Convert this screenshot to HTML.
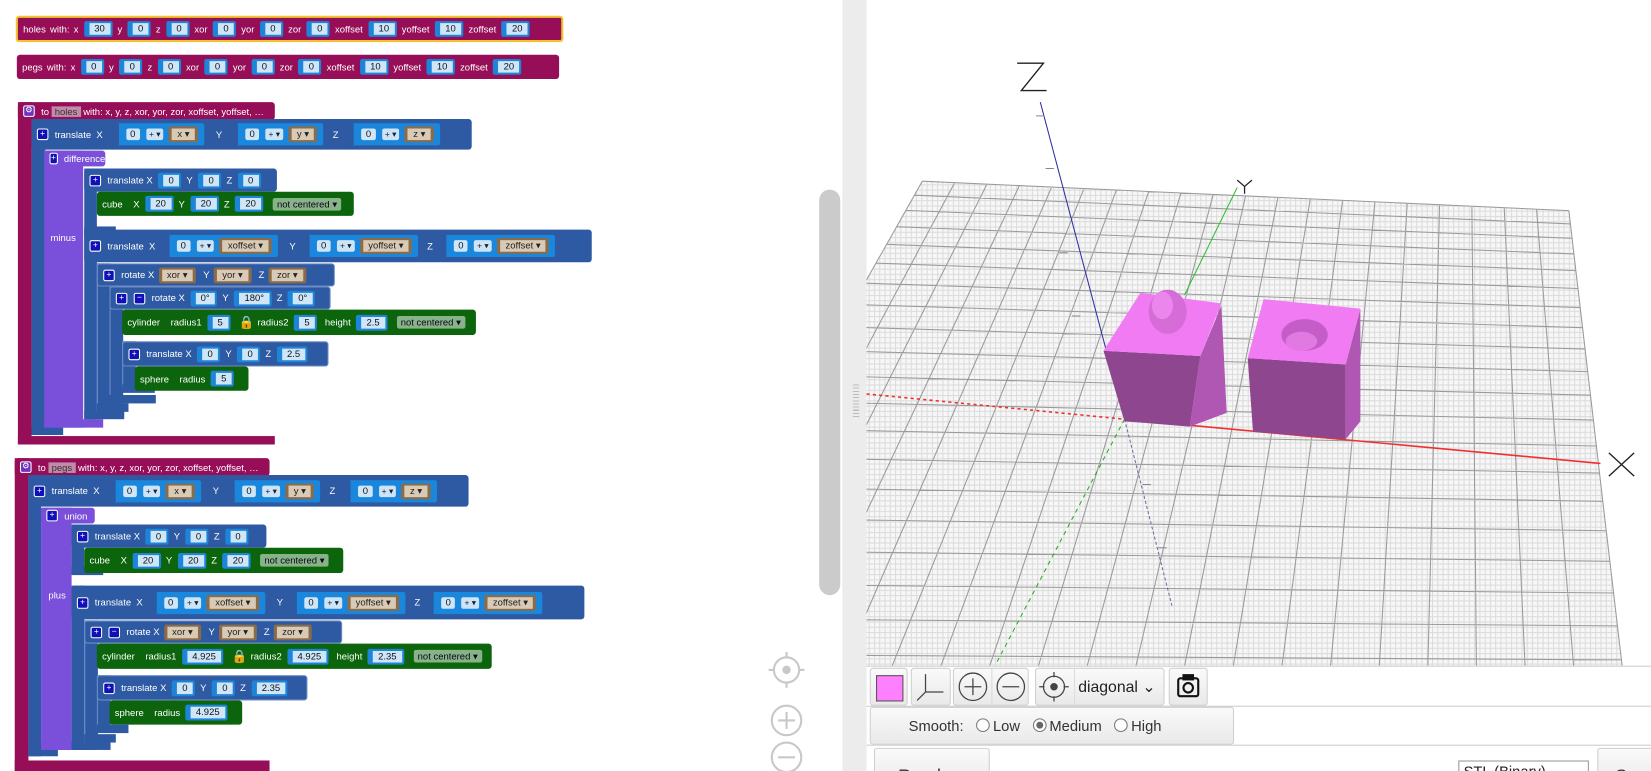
<!DOCTYPE html>
<html><head><meta charset="utf-8">
<style>
html,body{margin:0;padding:0;background:#fff;overflow:hidden;width:1651px;height:771px}
#w{position:relative;width:1568px;height:732px;transform:scale(1.05293,1.0533);transform-origin:0 0;font-family:"Liberation Sans",Arial,sans-serif}
.a{position:absolute}
.b{position:absolute;display:flex;align-items:center;color:#fff;font-size:9px;white-space:nowrap;padding-left:5px;box-sizing:border-box;border-radius:3px}
.mg{background:#960e58}.bl{background:#2d5aa2}.pu{background:#7a4fd9}.gr{background:#0c650c}
.n{display:inline-block;background:#cfe6f9;color:#111;border:2px solid #1c84d9;border-left:5px solid #1c84d9;border-radius:2px;padding:0 5px;line-height:11px;font-size:9px;margin:0 5px 0 5px}
.m{display:flex;align-items:center;background:#1b87dc;padding:3px 4px;margin:0 6px 0 4px;border-left:3px solid #2d5aa2;border-radius:2px}
.m .n{border:none;margin:0 3px;padding:0 4px}
.op{background:#cde4f7;color:#123;padding:0 3px;line-height:11px;margin:0 3px;font-size:8px;border-radius:2px}
.v{background:#8b6b48;padding:2px 3px;margin:0 2px;border-radius:2px}
.v span{background:#d8cab5;color:#222;padding:0 5px;line-height:11px;display:inline-block}
.dd{background:#86b486;color:#102;padding:0 4px;line-height:12px;border-radius:2px;margin-left:4px}
.ic{display:inline-block;width:9px;height:9px;background:#1010b8;border:1px solid #fff;border-radius:2px;color:#fff;font-size:8px;line-height:8px;text-align:center;margin-right:6px}
.t{margin:0 4px}
.tb{position:absolute;background:linear-gradient(#fafafa,#e9e9e9);border:1px solid #cfcfcf;border-radius:3px;box-sizing:border-box}
</style></head><body><div id="w">

<div class="b mg" style="left:15px;top:15px;width:520px;height:25px;border:2px solid #f2c230">holes <span class="t">with:</span> x<span class="n">30</span>y<span class="n">0</span>z<span class="n">0</span>xor<span class="n">0</span>yor<span class="n">0</span>zor<span class="n">0</span>xoffset<span class="n">10</span>yoffset<span class="n">10</span>zoffset<span class="n">20</span></div>
<div class="b mg" style="left:16px;top:52px;width:515px;height:23px">pegs <span class="t">with:</span> x<span class="n">0</span>y<span class="n">0</span>z<span class="n">0</span>xor<span class="n">0</span>yor<span class="n">0</span>zor<span class="n">0</span>xoffset<span class="n">10</span>yoffset<span class="n">10</span>zoffset<span class="n">20</span></div>

<div class="a mg" style="left:17px;top:97px;width:13px;height:325px"></div>
<div class="a mg" style="left:17px;top:414px;width:244px;height:8px"></div>
<div class="b mg" style="left:17px;top:97px;width:244px;height:17px"><span class="ic" style="background:#7030c0">⚙</span>to&nbsp;<span style="background:#c08aa8;padding:0 3px;color:#333">holes</span>&nbsp;with: x, y, z, xor, yor, zor, xoffset, yoffset, …</div>
<div class="a bl" style="left:30px;top:113px;width:13px;height:300px"></div>
<div class="a bl" style="left:30px;top:405px;width:30px;height:8px"></div>
<div class="b bl" style="left:30px;top:113px;width:418px;height:29px"><span class="ic">+</span>translate&nbsp; X<div class="m" style="margin-left:12px"><span class="n">0</span><span class="op">+ ▾</span><span class="v"><span>x ▾</span></span></div>&nbsp;&nbsp;Y<div class="m" style="margin-left:12px"><span class="n">0</span><span class="op">+ ▾</span><span class="v"><span>y ▾</span></span></div>&nbsp;Z<div class="m" style="margin-left:12px"><span class="n">0</span><span class="op">+ ▾</span><span class="v"><span>z ▾</span></span></div></div>
<div class="a pu" style="left:42px;top:143px;width:37px;height:263px"></div>
<div class="a pu" style="left:42px;top:398px;width:56px;height:8px"></div>
<div class="b pu" style="left:42px;top:143px;width:58px;height:15px"><span class="ic">+</span>difference</div>
<div class="a" style="left:48px;top:221px;color:#fff;font-size:9px">minus</div>
<div class="a bl" style="left:80px;top:160px;width:12px;height:62px"></div>
<div class="a bl" style="left:80px;top:215px;width:30px;height:8px"></div>
<div class="b bl" style="left:80px;top:160px;width:183px;height:22px"><span class="ic">+</span>translate&nbsp;X<span class="n">0</span>Y<span class="n">0</span>Z<span class="n">0</span></div>
<div class="b gr" style="left:92px;top:182px;width:244px;height:23px">cube&nbsp;&nbsp;&nbsp; X<span class="n">20</span>Y<span class="n">20</span>Z<span class="n">20</span><span class="dd">not centered ▾</span></div>
<div class="a bl" style="left:80px;top:218px;width:12px;height:180px"></div>
<div class="a bl" style="left:80px;top:390px;width:38px;height:8px"></div>
<div class="b bl" style="left:80px;top:218px;width:482px;height:31px"><span class="ic">+</span>translate&nbsp; X<div class="m" style="margin-left:10px"><span class="n">0</span><span class="op">+ ▾</span><span class="v"><span>xoffset ▾</span></span></div>&nbsp;&nbsp;Y<div class="m" style="margin-left:10px"><span class="n">0</span><span class="op">+ ▾</span><span class="v"><span>yoffset ▾</span></span></div>&nbsp;Z<div class="m" style="margin-left:10px"><span class="n">0</span><span class="op">+ ▾</span><span class="v"><span>zoffset ▾</span></span></div></div>
<div class="a bl" style="left:92px;top:250px;width:12px;height:140px;border-left:1px solid #6d8cc4"></div>
<div class="a bl" style="left:92px;top:383px;width:30px;height:8px"></div>
<div class="b bl" style="left:92px;top:250px;width:226px;height:22px;border:1px solid #6d8cc4"><span class="ic">+</span>rotate&nbsp;X<span class="v" style="margin-left:4px"><span>xor ▾</span></span>&nbsp;&nbsp;Y<span class="v" style="margin-left:4px"><span>yor ▾</span></span>&nbsp;&nbsp;Z<span class="v" style="margin-left:4px"><span>zor ▾</span></span></div>
<div class="a bl" style="left:104px;top:272px;width:12px;height:111px;border-left:1px solid #6d8cc4"></div>
<div class="a bl" style="left:104px;top:375px;width:44px;height:8px"></div>
<div class="b bl" style="left:104px;top:272px;width:210px;height:22px;border:1px solid #6d8cc4"><span class="ic">+</span><span class="ic">−</span>rotate&nbsp;X<span class="n">0°</span>Y<span class="n">180°</span>Z<span class="n">0°</span></div>
<div class="b gr" style="left:116px;top:294px;width:336px;height:24px">cylinder&nbsp;&nbsp;&nbsp; radius1<span class="n">5</span><span style="color:#f5c000;font-size:12px;margin:0 3px">🔒</span>radius2<span class="n">5</span>&nbsp;height<span class="n">2.5</span><span class="dd">not centered ▾</span></div>
<div class="a bl" style="left:116px;top:324px;width:12px;height:48px;border-left:1px solid #6d8cc4"></div>
<div class="a bl" style="left:116px;top:365px;width:31px;height:8px"></div>
<div class="b bl" style="left:116px;top:324px;width:196px;height:24px;border:1px solid #6d8cc4"><span class="ic">+</span>translate&nbsp;X<span class="n">0</span>Y<span class="n">0</span>Z<span class="n">2.5</span></div>
<div class="b gr" style="left:128px;top:348px;width:108px;height:23px">sphere&nbsp;&nbsp;&nbsp; radius<span class="n">5</span></div>

<div class="a mg" style="left:14px;top:435px;width:13px;height:297px"></div>
<div class="a mg" style="left:14px;top:722px;width:242px;height:10px"></div>
<div class="b mg" style="left:14px;top:435px;width:242px;height:17px"><span class="ic" style="background:#7030c0">⚙</span>to&nbsp;<span style="background:#c08aa8;padding:0 3px;color:#333">pegs</span>&nbsp;with: x, y, z, xor, yor, zor, xoffset, yoffset, …</div>
<div class="a bl" style="left:27px;top:451px;width:12px;height:267px"></div>
<div class="a bl" style="left:27px;top:710px;width:28px;height:8px"></div>
<div class="b bl" style="left:27px;top:451px;width:418px;height:30px"><span class="ic">+</span>translate&nbsp; X<div class="m" style="margin-left:12px"><span class="n">0</span><span class="op">+ ▾</span><span class="v"><span>x ▾</span></span></div>&nbsp;&nbsp;Y<div class="m" style="margin-left:12px"><span class="n">0</span><span class="op">+ ▾</span><span class="v"><span>y ▾</span></span></div>&nbsp;Z<div class="m" style="margin-left:12px"><span class="n">0</span><span class="op">+ ▾</span><span class="v"><span>z ▾</span></span></div></div>
<div class="a pu" style="left:39px;top:482px;width:29px;height:230px"></div>
<div class="a pu" style="left:39px;top:704px;width:52px;height:8px"></div>
<div class="b pu" style="left:39px;top:482px;width:51px;height:15px"><span class="ic">+</span>union</div>
<div class="a" style="left:46px;top:560px;color:#fff;font-size:9px">plus</div>
<div class="a bl" style="left:68px;top:498px;width:12px;height:47px"></div>
<div class="a bl" style="left:68px;top:538px;width:30px;height:8px"></div>
<div class="b bl" style="left:68px;top:498px;width:185px;height:22px"><span class="ic">+</span>translate&nbsp;X<span class="n">0</span>Y<span class="n">0</span>Z<span class="n">0</span></div>
<div class="b gr" style="left:80px;top:520px;width:246px;height:24px">cube&nbsp;&nbsp;&nbsp; X<span class="n">20</span>Y<span class="n">20</span>Z<span class="n">20</span><span class="dd">not centered ▾</span></div>
<div class="a bl" style="left:68px;top:556px;width:12px;height:156px"></div>
<div class="a bl" style="left:68px;top:704px;width:37px;height:8px"></div>
<div class="b bl" style="left:68px;top:556px;width:487px;height:32px"><span class="ic">+</span>translate&nbsp; X<div class="m" style="margin-left:10px"><span class="n">0</span><span class="op">+ ▾</span><span class="v"><span>xoffset ▾</span></span></div>&nbsp;&nbsp;Y<div class="m" style="margin-left:10px"><span class="n">0</span><span class="op">+ ▾</span><span class="v"><span>yoffset ▾</span></span></div>&nbsp;Z<div class="m" style="margin-left:10px"><span class="n">0</span><span class="op">+ ▾</span><span class="v"><span>zoffset ▾</span></span></div></div>
<div class="a bl" style="left:80px;top:589px;width:12px;height:116px;border-left:1px solid #6d8cc4"></div>
<div class="a bl" style="left:80px;top:697px;width:30px;height:8px"></div>
<div class="b bl" style="left:80px;top:589px;width:245px;height:22px;border:1px solid #6d8cc4"><span class="ic">+</span><span class="ic">−</span>rotate&nbsp;X<span class="v" style="margin-left:4px"><span>xor ▾</span></span>&nbsp;&nbsp;Y<span class="v" style="margin-left:4px"><span>yor ▾</span></span>&nbsp;&nbsp;Z<span class="v" style="margin-left:4px"><span>zor ▾</span></span></div>
<div class="b gr" style="left:92px;top:611px;width:375px;height:24px">cylinder&nbsp;&nbsp;&nbsp; radius1<span class="n">4.925</span><span style="color:#f5c000;font-size:12px;margin:0 3px">🔒</span>radius2<span class="n">4.925</span>&nbsp;height<span class="n">2.35</span><span class="dd">not centered ▾</span></div>
<div class="a bl" style="left:92px;top:641px;width:12px;height:54px;border-left:1px solid #6d8cc4"></div>
<div class="a bl" style="left:92px;top:688px;width:30px;height:8px"></div>
<div class="b bl" style="left:92px;top:641px;width:200px;height:24px;border:1px solid #6d8cc4"><span class="ic">+</span>translate&nbsp;X<span class="n">0</span>Y<span class="n">0</span>Z<span class="n">2.35</span></div>
<div class="b gr" style="left:104px;top:665px;width:126px;height:23px">sphere&nbsp;&nbsp;&nbsp; radius<span class="n">4.925</span></div>

<svg class="a" style="left:725px;top:615px" width="45" height="120" viewBox="0 0 45 120" fill="none" stroke="#c8c8c8" stroke-width="2">
<circle cx="22" cy="21" r="12"/><circle cx="22" cy="21" r="4" fill="#c8c8c8" stroke="none"/><path d="M22 4v5M22 33v5M5 21h5M34 21h5"/>
<circle cx="22" cy="69" r="14"/><path d="M22 61v16M14 69h16"/>
<circle cx="22" cy="104" r="14"/><path d="M14 104h16"/>
</svg>
<div class="a" style="left:778px;top:180px;width:20px;height:385px;background:#cbcbcb;border-radius:10px"></div>
<div class="a" style="left:800px;top:0;width:23px;height:732px;background:#ececec"></div>
<div class="a" style="left:810px;top:365px;width:6px;height:32px;background:repeating-linear-gradient(#bbb 0 1px,transparent 1px 3px)"></div>

<svg class="a" style="left:0;top:0" width="1568" height="632" viewBox="0 0 1568 632">
<defs>
<clipPath id="c"><rect x="823" y="0" width="745" height="632"/></clipPath>
<pattern id="p" width="5" height="5" patternUnits="userSpaceOnUse"><rect width="5" height="5" fill="#f7f7f7"/><path d="M0 0.5H5M0.5 0V5" stroke="#dcdcdc" stroke-width="1"/></pattern>
</defs>
<g clip-path="url(#c)">
<polygon points="876,172 1490,200 1552,730 560,730" fill="url(#p)"/>
<g id="grid" stroke="#9a9a9a" stroke-width="1" fill="none"></g>
<path d="M823,374 L1068,398" stroke="#f03030" stroke-width="1.5" stroke-dasharray="3,3"/>
<path d="M1068,398 L1520,440" stroke="#f03030" stroke-width="1.5"/>
<path d="M1068,398 L945,632" stroke="#20b020" stroke-width="1" stroke-dasharray="4,4"/>
<path d="M1125,280 L1175,178" stroke="#30c030" stroke-width="1"/>
<path d="M988,97 L1068,398" stroke="#3030a0" stroke-width="1"/>
<path d="M1068,398 L1113,575" stroke="#7070a0" stroke-width="1" stroke-dasharray="3,2"/>
<path d="M984,110h8M993,160h8M1006,240h8M1018,300h8M1085,460h8M1100,520h8" stroke="#888" stroke-width="1"/>
<polygon points="1048,333 1140,338 1130,405 1068,400" fill="#8e468f"/>
<polygon points="1140,338 1160,290 1165,392 1130,405" fill="#b056b3"/>
<polygon points="1083,278 1160,288 1140,338 1048,333" fill="#f17bf3"/>
<ellipse cx="1109" cy="296" rx="18" ry="21" fill="#d66cd8"/>
<ellipse cx="1104" cy="290" rx="10" ry="13" fill="#ea86ec"/>
<polygon points="1185,340 1278,346 1278,417 1190,410" fill="#8e468f"/>
<polygon points="1278,346 1292,293 1292,400 1278,417" fill="#b056b3"/>
<polygon points="1200,284 1292,293 1278,346 1185,340" fill="#f17bf3"/>
<ellipse cx="1239" cy="318" rx="22" ry="15" fill="#c45dc7"/>
<ellipse cx="1236" cy="324" rx="15" ry="9" fill="#e07ae2"/>
<path d="M966,60H991L970,86H994" stroke="#222" stroke-width="1.3" fill="none"/>
<path d="M1175,171L1182,177L1189,171M1182,177V184" stroke="#222" stroke-width="1.2" fill="none"/>
<path d="M1528,430L1552,452M1552,430L1528,452" stroke="#222" stroke-width="1.3" fill="none"/>
</g>
</svg>

<div class="a" style="left:823px;top:632px;width:745px;height:1px;background:#ccc"></div>
<div class="a" style="left:823px;top:670px;width:745px;height:1px;background:#ccc"></div>
<div class="a" style="left:823px;top:707px;width:745px;height:1px;background:#ccc"></div>
<div class="tb" style="left:826px;top:634px;width:36px;height:36px"><div class="a" style="left:5px;top:6px;width:24px;height:23px;background:#ff80ff;border:1px solid #555"></div></div>
<div class="tb" style="left:865px;top:634px;width:38px;height:36px"><svg width="36" height="34"><path d="M13 5V22H30M13 22L5 30" stroke="#444" stroke-width="1.2" fill="none"/></svg></div>
<div class="tb" style="left:905px;top:634px;width:72px;height:36px"><svg width="70" height="34" fill="none" stroke="#444" stroke-width="1.2"><circle cx="18" cy="17" r="13"/><path d="M18 9v16M10 17h16"/><circle cx="54" cy="17" r="13"/><path d="M46 17h16"/><path d="M36 0v34" stroke="#ddd"/></svg></div>
<div class="tb" style="left:983px;top:634px;width:123px;height:36px"><svg class="a" style="left:0;top:0" width="36" height="34" fill="none" stroke="#444" stroke-width="1.2"><circle cx="17" cy="17" r="10"/><circle cx="17" cy="17" r="3" fill="#444"/><path d="M17 3v5M17 26v5M3 17h5M26 17h5"/></svg><div class="a" style="left:36px;top:0;height:34px;border-left:1px solid #ddd"></div><div class="a" style="left:40px;top:8px;font-size:15px;color:#222">diagonal ⌄</div></div>
<div class="tb" style="left:1110px;top:634px;width:37px;height:36px"><svg width="35" height="34" fill="none" stroke="#111" stroke-width="2"><rect x="8" y="9" width="19" height="17" rx="2"/><rect x="13" y="6" width="9" height="4" fill="#111"/><circle cx="17.5" cy="18" r="4.5"/></svg></div>
<div class="tb" style="left:826px;top:671px;width:346px;height:36px"><div class="a" style="left:36px;top:9px;font-size:14px;color:#333;white-space:nowrap">Smooth: <span style="display:inline-block;width:11px;height:11px;border:1px solid #777;border-radius:50%;vertical-align:-1px;margin:0 3px 0 8px;background:#fff"></span>Low <span style="display:inline-block;width:11px;height:11px;border:1px solid #777;border-radius:50%;vertical-align:-1px;margin:0 3px 0 8px;background:radial-gradient(#666 0 3px,#fff 3.5px)"></span>Medium <span style="display:inline-block;width:11px;height:11px;border:1px solid #777;border-radius:50%;vertical-align:-1px;margin:0 3px 0 8px;background:#fff"></span>High</div></div>
<div class="tb" style="left:830px;top:710px;width:110px;height:40px;overflow:hidden"><div class="a" style="left:22px;top:16px;font-size:17px;color:#333">Render</div></div>
<div class="a" style="left:1385px;top:722px;width:124px;height:20px;border:1px solid #999;overflow:hidden;font-size:14px;color:#222;box-sizing:border-box;padding:1px 4px">STL (Binary)</div>
<div class="tb" style="left:1517px;top:710px;width:60px;height:40px;overflow:hidden"><div class="a" style="left:16px;top:16px;font-size:17px;color:#333">Save</div></div>
</div>
<script>
(function(){
var g=document.getElementById('grid');var A=[876,172],B=[1490,200],C=[1552,730],D=[560,730];
function L(p,q,t){return [p[0]+(q[0]-p[0])*t,p[1]+(q[1]-p[1])*t];}
function pv(t){return t*(0.5+0.5*t);}
var s='';var N=22;
for(var i=0;i<=N;i++){var t=pv(i/N);var l=L(A,D,t),r=L(B,C,t);s+='M'+l[0].toFixed(1)+' '+l[1].toFixed(1)+'L'+r[0].toFixed(1)+' '+r[1].toFixed(1);}
var M=20;
for(var j=0;j<=M;j++){var u=j/M;var p=[],k;for(k=0;k<=12;k++){var t=pv(k/12);var l=L(A,D,t),r=L(B,C,t);var q=L(l,r,u);p.push(q[0].toFixed(1)+' '+q[1].toFixed(1));}s+='M'+p.join('L');}
var e=document.createElementNS('http://www.w3.org/2000/svg','path');e.setAttribute('d',s);g.appendChild(e);
})();
</script>
</body></html>
